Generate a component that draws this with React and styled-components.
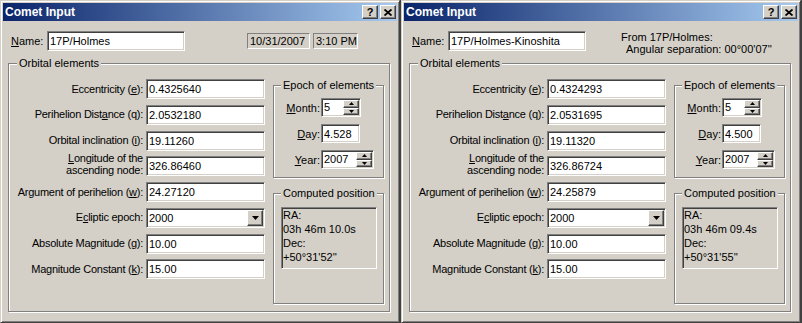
import React from 'react';
import styled, { createGlobalStyle, css } from 'styled-components';

const Global = createGlobalStyle`
  html, body { margin: 0; padding: 0; background: #404040; }
  body { font-family: "Liberation Sans", Arial, sans-serif; font-size: 11px; color: #000; }
  * { box-sizing: border-box; }
`;

const sunken = css`
  border: 1px solid;
  border-color: #808080 #ffffff #ffffff #808080;
  box-shadow: inset 1px 1px 0 #404040, inset -1px -1px 0 #d4d0c8;
`;

const raised = css`
  background: #d4d0c8;
  border: 1px solid;
  border-color: #ffffff #404040 #404040 #ffffff;
  box-shadow: inset -1px -1px 0 #808080;
`;

const Desktop = styled.div`
  display: flex;
  gap: 1px;
  width: 802px;
  height: 323px;
  background: #404040;
`;

const Window = styled.div`
  width: 400px;
  height: 323px;
  background: #d4d0c8;
  border: 1px solid;
  border-color: #d4d0c8 #404040 #404040 #d4d0c8;
  box-shadow: inset 1px 1px 0 #ffffff, inset -1px -1px 0 #808080;
  padding: 2px;
  display: flex;
  flex-direction: column;
`;

const TitleBar = styled.div`
  height: 18px;
  flex: none;
  display: flex;
  align-items: center;
  padding: 0 1px 0 2px;
  background: linear-gradient(to right, #0a246a, #a6caf0);
  color: #fff;
  font-weight: bold;
  font-size: 12px;
`;

const TitleText = styled.span`
  flex: 1;
`;

const CaptionButton = styled.div`
  ${raised};
  width: 16px;
  height: 14px;
  display: flex;
  align-items: center;
  justify-content: center;
  color: #000;
  font-size: 11px;
  font-weight: bold;
  line-height: 12px;
  margin-left: ${p => p.$gap}px;
`;

const Body = styled.div`
  flex: 1;
  display: flex;
  flex-direction: column;
  padding: 10px 7px 0 5px;
  gap: 6px;
`;

const NameRow = styled.div`
  height: 20px;
  display: flex;
  align-items: center;
  padding-left: 3px;
`;

const NameLabel = styled.label`
  width: 36px;
`;

const TextField = styled.input`
  ${sunken};
  width: ${p => p.$w}px;
  height: ${p => p.$h || 20}px;
  background: #fff;
  padding: 0 2px;
  font: inherit;
  color: #000;
  outline: none;
`;

const StaticBox = styled.div`
  border: 1px solid;
  border-color: #808080 #ffffff #ffffff #808080;
  width: ${p => p.$w}px;
  height: 16px;
  line-height: 14px;
  padding: 0 2px;
  margin-left: ${p => p.$ml}px;
  white-space: nowrap;
`;

const Info = styled.div`
  margin-left: 35px;
  margin-top: 3px;
  line-height: 12px;
  white-space: nowrap;
`;

const InfoLine = styled.div`
  padding-left: ${p => p.$indent || 0}px;
`;

const Group = styled.fieldset`
  margin: 0;
  padding: 0;
  min-width: 0;
  border: 1px solid #808080;
  box-shadow: inset 1px 1px 0 #ffffff, 1px 1px 0 #ffffff;
  ${p => p.$w && `width: ${p.$w}px;`}
  ${p => p.$h && `height: ${p.$h}px;`}
`;

const Legend = styled.legend`
  margin-left: ${p => p.$ml}px;
  padding: 0 2px;
  line-height: 13px;
  font-size: 11px;
  background: #d4d0c8;
  white-space: nowrap;
`;

const OuterContent = styled.div`
  display: flex;
  align-items: flex-start;
  gap: 8px;
  padding: 9px 5px 7px 0;
`;

const FieldGrid = styled.div`
  display: grid;
  grid-template-columns: 134px 119px;
  column-gap: 3px;
  row-gap: 5.75px;
  grid-auto-rows: 20px;
  align-items: center;
`;

const RowLabel = styled.label`
  height: 20px;
  display: flex;
  flex-direction: column;
  justify-content: center;
  align-items: flex-end;
  text-align: right;
  white-space: nowrap;
  letter-spacing: -0.25px;
  line-height: ${p => (p.$two ? '12px' : '13px')};
  padding-bottom: ${p => (p.$two ? '4px' : '0')};
`;

const U = styled.u`
  text-decoration: underline;
  text-underline-offset: 1px;
`;

const RightCol = styled.div`
  width: 111px;
  display: flex;
  flex-direction: column;
  gap: 9px;
`;

const EpochGrid = styled.div`
  display: grid;
  grid-template-columns: 38px auto;
  column-gap: 1px;
  row-gap: 7px;
  grid-auto-rows: 19px;
  align-items: center;
  justify-items: start;
  padding: 6px 0 8px 8px;
`;

const SmallLabel = styled.label`
  justify-self: end;
  white-space: nowrap;
`;

const SpinBox = styled.div`
  ${sunken};
  width: ${p => p.$w}px;
  height: 19px;
  background: #fff;
  padding: 1px;
  display: flex;
`;

const SpinText = styled.span`
  flex: 1;
  padding-left: 1px;
  line-height: 15px;
`;

const SpinButtons = styled.div`
  width: 16px;
  display: flex;
  flex-direction: column;
`;

const SpinButton = styled.div`
  ${raised};
  flex: 1;
  display: flex;
  align-items: center;
  justify-content: center;
`;

const ComboBox = styled.div`
  ${sunken};
  width: 119px;
  height: 20px;
  background: #fff;
  padding: 1px;
  display: flex;
`;

const ComboText = styled.span`
  flex: 1;
  padding-left: 1px;
  line-height: 16px;
`;

const DropButton = styled.div`
  ${raised};
  width: 16px;
  display: flex;
  align-items: center;
  justify-content: center;
`;

const PosWrap = styled.div`
  padding: 7px 0 0 7px;
`;

const PosBox = styled.div`
  ${sunken};
  width: 96px;
  height: 62px;
  padding: 0 1px;
  line-height: 14px;
  white-space: nowrap;
`;

const Arrow = ({ dir, w = 5, h = 3 }) => (
  <svg width={w} height={h} viewBox={`0 0 ${w} ${h}`}>
    {dir === 'up' ? (
      <polygon points={`${w / 2},0 ${w},${h} 0,${h}`} fill="#000" />
    ) : (
      <polygon points={`0,0 ${w},0 ${w / 2},${h}`} fill="#000" />
    )}
  </svg>
);

const CloseGlyph = () => (
  <svg width="8" height="7" viewBox="0 0 8 7">
    <path d="M0.5 0.5 L7.5 6.5 M7.5 0.5 L0.5 6.5" stroke="#000" strokeWidth="1.8" fill="none" />
  </svg>
);

const Spin = ({ w, value }) => (
  <SpinBox $w={w}>
    <SpinText>{value}</SpinText>
    <SpinButtons>
      <SpinButton><Arrow dir="up" /></SpinButton>
      <SpinButton><Arrow dir="down" /></SpinButton>
    </SpinButtons>
  </SpinBox>
);

const CometWindow = ({ d }) => (
  <Window>
    <TitleBar>
      <TitleText>Comet Input</TitleText>
      <CaptionButton $gap={0}>?</CaptionButton>
      <CaptionButton $gap={2}><CloseGlyph /></CaptionButton>
    </TitleBar>
    <Body>
      <NameRow>
        <NameLabel><U>N</U>ame:</NameLabel>
        <TextField $w={138} value={d.name} readOnly />
        {d.date ? (
          <>
            <StaticBox $w={63} $ml={62}>{d.date}</StaticBox>
            <StaticBox $w={45} $ml={3}>{d.time}</StaticBox>
          </>
        ) : (
          <Info>
            <InfoLine>From 17P/Holmes:</InfoLine>
            <InfoLine $indent={5}>Angular separation: 00°00'07''</InfoLine>
          </Info>
        )}
      </NameRow>
      <Group $w={382}>
        <Legend $ml={8}>Orbital elements</Legend>
        <OuterContent>
          <FieldGrid>
            <RowLabel><span>Eccentricity (<U>e</U>):</span></RowLabel>
            <TextField $w={119} value={d.e} readOnly />
            <RowLabel><span>Perihelion Dist<U>a</U>nce (q):</span></RowLabel>
            <TextField $w={119} value={d.q} readOnly />
            <RowLabel><span>Orbital inclination (<U>i</U>):</span></RowLabel>
            <TextField $w={119} value={d.i} readOnly />
            <RowLabel $two>
              <span><U>L</U>ongitude of the</span>
              <span>ascending node:</span>
            </RowLabel>
            <TextField $w={119} value={d.node} readOnly />
            <RowLabel><span>Argument of perihelion (<U>w</U>):</span></RowLabel>
            <TextField $w={119} value={d.w} readOnly />
            <RowLabel><span>E<U>c</U>liptic epoch:</span></RowLabel>
            <ComboBox>
              <ComboText>{d.epoch}</ComboText>
              <DropButton><Arrow dir="down" w={7} h={4} /></DropButton>
            </ComboBox>
            <RowLabel><span>Absolute Magnitude (<U>g</U>):</span></RowLabel>
            <TextField $w={119} value={d.g} readOnly />
            <RowLabel><span>Magnitude Constant (<U>k</U>):</span></RowLabel>
            <TextField $w={119} value={d.k} readOnly />
          </FieldGrid>
          <RightCol>
            <Group>
              <Legend $ml={7}>Epoch of elements</Legend>
              <EpochGrid>
                <SmallLabel><U>M</U>onth:</SmallLabel>
                <Spin w={40} value={d.month} />
                <SmallLabel><U>D</U>ay:</SmallLabel>
                <TextField $w={39} $h={19} value={d.day} readOnly />
                <SmallLabel><U>Y</U>ear:</SmallLabel>
                <Spin w={53} value={d.year} />
              </EpochGrid>
            </Group>
            <Group $h={117}>
              <Legend $ml={7}>Computed position</Legend>
              <PosWrap>
                <PosBox>
                  <div>RA:</div>
                  <div>{d.ra}</div>
                  <div>Dec:</div>
                  <div>{d.dec}</div>
                </PosBox>
              </PosWrap>
            </Group>
          </RightCol>
        </OuterContent>
      </Group>
    </Body>
  </Window>
);

const left = {
  name: '17P/Holmes',
  date: '10/31/2007',
  time: '3:10 PM',
  e: '0.4325640',
  q: '2.0532180',
  i: '19.11260',
  node: '326.86460',
  w: '24.27120',
  epoch: '2000',
  g: '10.00',
  k: '15.00',
  month: '5',
  day: '4.528',
  year: '2007',
  ra: '03h 46m 10.0s',
  dec: "+50°31'52''",
};

const right = {
  name: '17P/Holmes-Kinoshita',
  e: '0.4324293',
  q: '2.0531695',
  i: '19.11320',
  node: '326.86724',
  w: '24.25879',
  epoch: '2000',
  g: '10.00',
  k: '15.00',
  month: '5',
  day: '4.500',
  year: '2007',
  ra: '03h 46m 09.4s',
  dec: "+50°31'55''",
};

export default function App() {
  return (
    <>
      <Global />
      <Desktop>
        <CometWindow d={left} />
        <CometWindow d={right} />
      </Desktop>
    </>
  );
}
